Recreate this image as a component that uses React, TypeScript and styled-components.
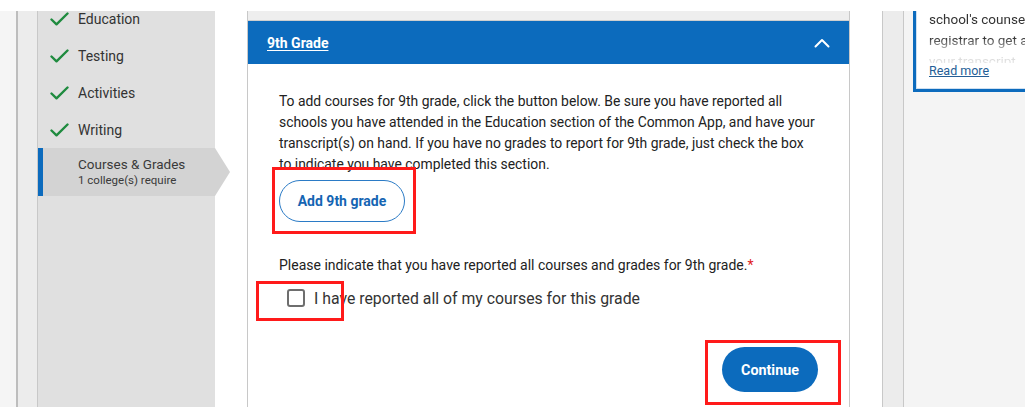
import React from "react"
import styled, { createGlobalStyle } from "styled-components"

const GlobalStyle = createGlobalStyle`
    html, body {
        margin: 0;
        padding: 0;
        background: #ffffff;
        overflow: hidden;
    }
    body {
        font-family: Roboto, "Liberation Sans", Arial, sans-serif;
        color: #222;
    }
`;

const Page = styled.div`
    height: 418px;
    padding: 11px 0;
    box-sizing: border-box;
    background: #fff;
`;
const Frame = styled.div`
    display: flex;
    height: 396px;
`;
const Gutter = styled.div`
    width: 16px;
    flex: none;
    background: #f5f5f5;
    border-right: 2px solid #bdbdbd;
`;
const Rail = styled.div<{ $wide?: boolean }>`
    width: ${p => (p.$wide ? 20 : 19)}px;
    flex: none;
    background: #ececec;
    border-right: 1px solid #c8c8c8;
    border-left: ${p => (p.$wide ? "1px solid #c8c8c8" : "none")};
`;
const Nav = styled.nav`
    width: 177px;
    flex: none;
    background: #e0e0e0;
`;
const NavList = styled.ul`
    list-style: none;
    margin: -48px 0 0;
    padding: 0;
`;
const NavItem = styled.li`
    height: 37px;
    display: flex;
    align-items: center;
    gap: 9px;
    padding-left: 12px;
    font-size: 14px;
    color: #333;
`;
const ActiveItem = styled.li`
    position: relative;
    height: 48px;
    display: flex;
    flex-direction: column;
    justify-content: center;
    padding-left: 35px;
    background: #d3d3d3;
    border-left: 5px solid #0c6bbd;
    color: #3a3a3a;
    &::after {
        content: "";
        position: absolute;
        top: 0;
        right: -15px;
        border-top: 24px solid transparent;
        border-bottom: 24px solid transparent;
        border-left: 15px solid #d3d3d3;
    }
`;
const ItemTitle = styled.span`
    font-size: 13.5px;
    line-height: 17px;
`;
const ItemSub = styled.span`
    font-size: 11.5px;
    line-height: 15px;
`;

const Card = styled.section`
    width: 601px;
    flex: none;
    margin: 0 32px;
    border-left: 1px solid #c8c8c8;
    border-right: 1px solid #c8c8c8;
    background: #fff;
`;
const TopStrip = styled.div`
    height: 9px;
    background: #eeeeee;
    border-bottom: 1px solid #cfcfcf;
`;
const Header = styled.div`
    height: 43px;
    background: #0c6bbd;
    display: flex;
    align-items: center;
    justify-content: space-between;
    padding: 0 19px;
    color: #fff;
`;
const HeaderTitle = styled.a`
    color: #fff;
    font-size: 14px;
    font-weight: 700;
    text-decoration: underline;
    text-underline-offset: 2px;
`;
const Body = styled.div`
    padding: 27px 31px 0;
`;
const Intro = styled.p`
    margin: 0;
    font-size: 13.9px;
    line-height: 21px;
    color: #222;
    white-space: nowrap;
`;
const Marked = styled.div<{ $t: number; $r: number; $b: number; $l: number }>`
    position: relative;
    display: inline-flex;
    &::after {
        content: "";
        position: absolute;
        top: -${p => p.$t}px;
        right: -${p => p.$r}px;
        bottom: -${p => p.$b}px;
        left: -${p => p.$l}px;
        border: 3px solid #ff1a1a;
        pointer-events: none;
    }
`;
const AddRow = styled.div`
    margin-top: 5px;
`;
const OutlineButton = styled.button`
    width: 126px;
    height: 42px;
    border-radius: 21px;
    border: 1.5px solid #2b7bc6;
    background: #fff;
    color: #1565b3;
    font-family: inherit;
    font-size: 14px;
    font-weight: 700;
`;
const Prompt = styled.p`
    margin: 33px 0 0;
    font-size: 14px;
    line-height: 21px;
    color: #222;
`;
const Req = styled.span`
    color: #e01b1b;
`;
const CheckRow = styled.label`
    margin-top: 10px;
    height: 24px;
    display: flex;
    align-items: center;
    gap: 9px;
    padding-left: 8px;
    font-size: 15.8px;
    color: #333;
`;
const Box = styled.span`
    display: block;
    width: 14px;
    height: 14px;
    border: 2px solid #6e6e6e;
    border-radius: 3px;
    background: #fff;
`;
const Actions = styled.div`
    margin-top: 37px;
    display: flex;
    justify-content: flex-end;
`;
const PrimaryButton = styled.button`
    width: 96px;
    height: 45px;
    border-radius: 23px;
    border: none;
    background: #0c6bbd;
    color: #fff;
    font-family: inherit;
    font-size: 14.3px;
    font-weight: 700;
`;

const Aside = styled.aside`
    flex: 1;
    background: #f4f4f4;
    padding-left: 9px;
    overflow: hidden;
`;
const Tip = styled.div`
    width: 260px;
    margin-top: -30px;
    background: #fff;
    border: 3px solid #0c6bbd;
    box-shadow: inset 0 0 0 1px #cfe0f1;
    padding: 4px 16px 10px 13px;
`;
const TipText = styled.div`
    max-height: 75px;
    overflow: hidden;
    font-size: 13.5px;
    line-height: 21px;
    color: #333;
    -webkit-mask-image: linear-gradient(to bottom, #000 50px, rgba(0,0,0,0.3) 62px, rgba(0,0,0,0.12) 75px);
    mask-image: linear-gradient(to bottom, #000 50px, rgba(0,0,0,0.3) 62px, rgba(0,0,0,0.12) 75px);
`;
const TipLine = styled.div`
    white-space: nowrap;
`;
const ReadMore = styled.a`
    display: block;
    font-size: 12.5px;
    line-height: 16px;
    color: #245e96;
    text-decoration: underline;
`;

const Check = () => (
    <svg width="19" height="14" viewBox="0 0 19 14" fill="none">
        <polyline points="1.5,7.5 6.5,12.3 17.5,1.5" stroke="#1f8b3f" strokeWidth="2.4" strokeLinecap="round" strokeLinejoin="round" />
    </svg>
)

const ChevronUp = () => (
    <svg width="16" height="10" viewBox="0 0 16 10" fill="none">
        <polyline points="1.5,8.5 8,2 14.5,8.5" stroke="#fff" strokeWidth="2" strokeLinecap="round" strokeLinejoin="round" />
    </svg>
)

const done = ["Profile", "Education", "Testing", "Activities", "Writing"]

export default function App() {
    return (
        <Page>
            <GlobalStyle />
            <Frame>
                <Gutter />
                <Rail />
                <Nav>
                    <NavList>
                        {done.map(d => (
                            <NavItem key={d}>
                                <Check />
                                {d}
                            </NavItem>
                        ))}
                        <ActiveItem>
                            <ItemTitle>Courses &amp; Grades</ItemTitle>
                            <ItemSub>1 college(s) require</ItemSub>
                        </ActiveItem>
                    </NavList>
                </Nav>
                <Card>
                    <TopStrip />
                    <Header>
                        <HeaderTitle>9th Grade</HeaderTitle>
                        <ChevronUp />
                    </Header>
                    <Body>
                        <Intro>
                            To add courses for 9th grade, click the button below. Be sure you have reported all<br />
                            schools you have attended in the Education section of the Common App, and have your<br />
                            transcript(s) on hand. If you have no grades to report for 9th grade, just check the box<br />
                            to indicate you have completed this section.
                        </Intro>
                        <AddRow>
                            <Marked $t={13} $r={11} $b={12} $l={7}>
                                <OutlineButton>Add 9th grade</OutlineButton>
                            </Marked>
                        </AddRow>
                        <Prompt>
                            Please indicate that you have reported all courses and grades for 9th grade.<Req>*</Req>
                        </Prompt>
                        <CheckRow>
                            <Marked $t={8} $r={39} $b={14} $l={31}>
                                <Box />
                            </Marked>
                            I have reported all of my courses for this grade
                        </CheckRow>
                        <Actions>
                            <Marked $t={7} $r={23} $b={13} $l={17}>
                                <PrimaryButton>Continue</PrimaryButton>
                            </Marked>
                        </Actions>
                    </Body>
                </Card>
                <Rail $wide />
                <Aside>
                    <Tip>
                        <TipText>
                            <TipLine>Please reach out to your</TipLine>
                            <TipLine>school's counselor or</TipLine>
                            <TipLine>registrar to get a copy of</TipLine>
                            <TipLine>your transcript.</TipLine>
                        </TipText>
                        <ReadMore>Read more</ReadMore>
                    </Tip>
                </Aside>
            </Frame>
        </Page>
    )
}
